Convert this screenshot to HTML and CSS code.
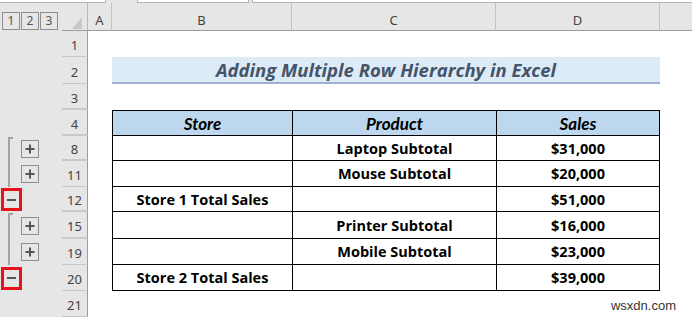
FILE: index.html
```html
<!DOCTYPE html>
<html>
<head>
<meta charset="utf-8">
<link rel="stylesheet" href="styles.css">
</head>
<body>
<div class="topbar"><div class="box b1"></div><div class="box b2"></div><div class="box b3"></div></div>

<div class="row hdr">
  <div class="gut levels"><span class="lvl">1</span><span class="lvl">2</span><span class="lvl">3</span></div>
  <div class="corner"><svg class="tri" width="10" height="12" viewBox="0 0 10 12"><polygon points="0,12 10,12 10,0" fill="#c9c9c9"/></svg></div>
  <div class="ch">A</div>
  <div class="ch">B</div>
  <div class="ch">C</div>
  <div class="ch">D</div>
  <div class="ch last"></div>
</div>

<div class="row h26">
  <div class="gut"></div><div class="rh">1</div>
  <div class="c"></div><div class="c"></div><div class="c"></div><div class="c"></div><div class="c"></div>
</div>

<div class="row h27">
  <div class="gut"></div><div class="rh">2</div>
  <div class="c"></div>
  <div class="title">Adding Multiple Row Hierarchy in Excel</div>
  <div class="c"></div>
</div>

<div class="row h26">
  <div class="gut"></div><div class="rh hid">3</div>
  <div class="c"></div><div class="c"></div><div class="c"></div><div class="c"></div><div class="c"></div>
</div>

<div class="row h26">
  <div class="gut"></div><div class="rh hid">4</div>
  <div class="c"></div>
  <div class="t th first top">Store</div>
  <div class="t th top">Product</div>
  <div class="t th top lastc">Sales</div>
  <div class="c"></div>
</div>

<div class="row h25">
  <div class="gut"><span class="br brtop"></span><span class="pl"><svg width="16" height="16" viewBox="0 0 16 16"><path d="M3.5 8h9M8 3.5v9" stroke="#555" stroke-width="2"/></svg></span></div>
  <div class="rh hid">8</div>
  <div class="c"></div>
  <div class="t first"></div>
  <div class="t">Laptop Subtotal</div>
  <div class="t lastc">$31,000</div>
  <div class="c"></div>
</div>

<div class="row h26">
  <div class="gut"><span class="br"></span><span class="pl"><svg width="16" height="16" viewBox="0 0 16 16"><path d="M3.5 8h9M8 3.5v9" stroke="#555" stroke-width="2"/></svg></span></div>
  <div class="rh">11</div>
  <div class="c"></div>
  <div class="t first"></div>
  <div class="t">Mouse Subtotal</div>
  <div class="t lastc">$20,000</div>
  <div class="c"></div>
</div>

<div class="row h25">
  <div class="gut"><span class="mn"><span class="dash"></span></span></div>
  <div class="rh hid">12</div>
  <div class="c"></div>
  <div class="t first">Store 1 Total Sales</div>
  <div class="t"></div>
  <div class="t lastc">$51,000</div>
  <div class="c"></div>
</div>

<div class="row h27">
  <div class="gut"><span class="br brtop"></span><span class="pl"><svg width="16" height="16" viewBox="0 0 16 16"><path d="M3.5 8h9M8 3.5v9" stroke="#555" stroke-width="2"/></svg></span></div>
  <div class="rh hid">15</div>
  <div class="c"></div>
  <div class="t first"></div>
  <div class="t">Printer Subtotal</div>
  <div class="t lastc">$16,000</div>
  <div class="c"></div>
</div>

<div class="row h26">
  <div class="gut"><span class="br"></span><span class="pl"><svg width="16" height="16" viewBox="0 0 16 16"><path d="M3.5 8h9M8 3.5v9" stroke="#555" stroke-width="2"/></svg></span></div>
  <div class="rh">19</div>
  <div class="c"></div>
  <div class="t first"></div>
  <div class="t">Mobile Subtotal</div>
  <div class="t lastc">$23,000</div>
  <div class="c"></div>
</div>

<div class="row h26">
  <div class="gut"><span class="mn"><span class="dash"></span></span></div>
  <div class="rh">20</div>
  <div class="c"></div>
  <div class="t first">Store 2 Total Sales</div>
  <div class="t"></div>
  <div class="t lastc">$39,000</div>
  <div class="c"></div>
</div>

<div class="row h26">
  <div class="gut"></div><div class="rh">21</div>
  <div class="c"></div><div class="c"></div><div class="c"></div><div class="c"></div><div class="c"></div>
</div>

<div class="wm">wsxdn.com</div>
</body>
</html>
```

FILE: styles.css
```css
* { box-sizing: border-box; margin: 0; padding: 0; }
body {
  width: 692px;
  height: 317px;
  overflow: hidden;
  background: #ffffff;
  font-family: "Open Sans", "Lato", sans-serif;
  position: relative;
}
.topbar {
  height: 3px;
  background: #e6e6e6;
  display: flex;
}
.box {
  height: 3px;
  background: #ffffff;
  border-bottom: 1px solid #b4b4b4;
}
.b1 { width: 106px; border-right: 1px solid #b4b4b4; }
.b2 { width: 112px; margin-left: 31px; border-left: 1px solid #b4b4b4; border-right: 1px solid #b4b4b4; }
.b3 { flex: 1; margin-left: 3px; border-left: 1px solid #b4b4b4; }

.row {
  display: grid;
  grid-template-columns: 62px 26px 24px 180px 204px 164px 1fr;
}
.hdr { height: 28px; }
.h25 { height: 25px; }
.h26 { height: 26px; }
.h27 { height: 27px; }

.gut {
  background: #e6e6e6;
  display: flex;
  align-items: stretch;
}
.levels {
  align-items: flex-end;
  gap: 1px;
  padding: 0 0 1px 2px;
}
.lvl {
  width: 18px;
  height: 18px;
  border: 1px solid #8e8e8e;
  display: flex;
  align-items: center;
  justify-content: center;
  font-family: "Noto Sans", sans-serif;
  font-size: 12px;
  color: #555555;
  line-height: 1;
}
.corner {
  background: #e6e6e6;
  border-right: 1px solid #b9b9b9;
  border-bottom: 1px solid #9d9d9d;
  display: flex;
  align-items: flex-end;
  padding: 0 0 1px 10px;
}
.ch {
  background: #e6e6e6;
  border-right: 1px solid #c2c2c2;
  border-bottom: 1px solid #9d9d9d;
  display: flex;
  align-items: center;
  justify-content: center;
  padding-top: 6px;
  font-family: "Noto Sans", sans-serif;
  font-size: 13px;
  color: #444444;
}
.ch.last { border-right: none; }

.rh {
  background: #e6e6e6;
  border-right: 1px solid #9d9d9d;
  border-bottom: 1px solid #c9c9c9;
  display: flex;
  align-items: center;
  justify-content: center;
  padding-top: 3px;
  font-family: "Noto Sans", sans-serif;
  font-size: 13px;
  color: #444444;
}
.rh.hid { border-bottom: 2px solid #c9c9c9; }

.br {
  width: 5px;
  margin-left: 8px;
  border-left: 2px solid #a3a3a3;
}
.brtop {
  border-top: 2px solid #a3a3a3;
  margin-top: 1px;
}
.pl {
  align-self: center;
  margin-left: 8px;
  width: 18px;
  height: 18px;
  border: 1px solid #8e8e8e;
  display: flex;
}
.mn {
  align-self: center;
  margin-left: 1px;
  width: 21px;
  height: 23px;
  border: 3px solid #e8131b;
  background: #e6e6e6;
  display: flex;
  align-items: center;
  justify-content: center;
}
.dash {
  width: 9px;
  height: 2px;
  background: #555555;
}

.c { background: #ffffff; }

.title {
  grid-column: span 3;
  background: #ddebf7;
  border-bottom: 2px solid #9db1d5;
  display: flex;
  align-items: center;
  justify-content: center;
  font-weight: 700;
  font-style: italic;
  font-size: 18.5px;
  color: #44546a;
}

.t {
  border-left: 1px solid #000000;
  border-bottom: 1px solid #000000;
  display: flex;
  align-items: center;
  justify-content: center;
  font-weight: 700;
  font-size: 14.5px;
  color: #000000;
}
.t.top { border-top: 1px solid #000000; }
.t.lastc { border-right: 1px solid #000000; }
.th {
  background: #bdd7ee;
  font-family: "Lato", sans-serif;
  font-style: italic;
  font-size: 17px;
}

.wm {
  position: absolute;
  right: 16px;
  bottom: 5px;
  font-family: "Liberation Sans", Arial, sans-serif;
  font-size: 13px;
  line-height: 13px;
  color: #333333;
}
```
